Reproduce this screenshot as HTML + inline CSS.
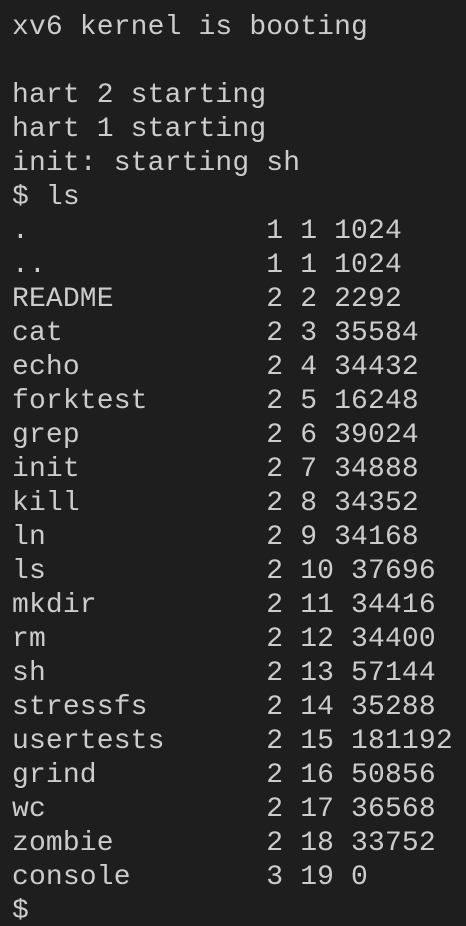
<!DOCTYPE html>
<html><head><style>
html,body{margin:0;padding:0;background:#1e1e1e;width:466px;height:926px;overflow:hidden}
pre{margin:0;padding:11px 0 0 12px;font-family:"Liberation Mono",monospace;font-size:28px;line-height:34px;letter-spacing:0.15px;color:#cccccc}
</style></head><body><pre>xv6 kernel is booting

hart 2 starting
hart 1 starting
init: starting sh
$ ls
.              1 1 1024
..             1 1 1024
README         2 2 2292
cat            2 3 35584
echo           2 4 34432
forktest       2 5 16248
grep           2 6 39024
init           2 7 34888
kill           2 8 34352
ln             2 9 34168
ls             2 10 37696
mkdir          2 11 34416
rm             2 12 34400
sh             2 13 57144
stressfs       2 14 35288
usertests      2 15 181192
grind          2 16 50856
wc             2 17 36568
zombie         2 18 33752
console        3 19 0
$ </pre></body></html>
